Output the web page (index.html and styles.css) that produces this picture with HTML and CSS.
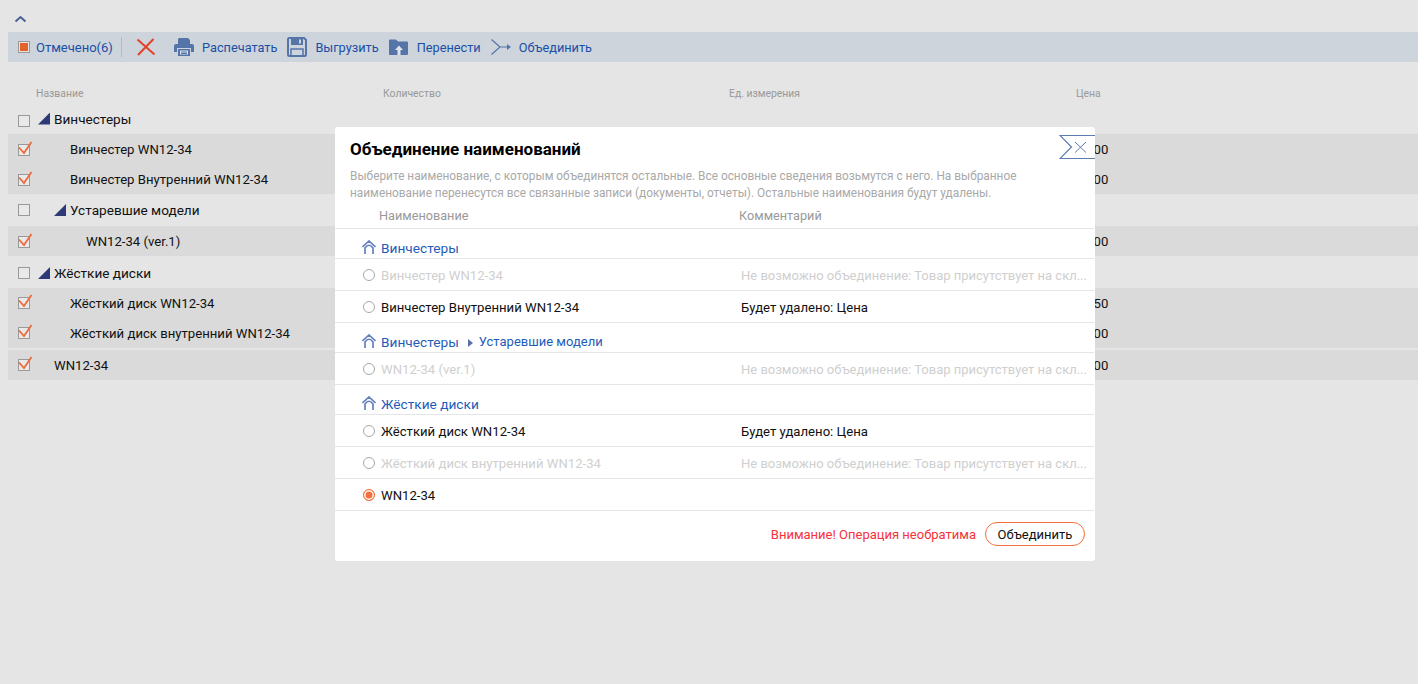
FILE: index.html
```html
<!DOCTYPE html>
<html lang="ru">
  <head>
    <meta charset="UTF-8" />
    <title>Объединение наименований</title>
    <link rel="stylesheet" href="styles.css">
  </head>
  <body>
    <div class="page">
      <div class="collapse">
        <svg width="13" height="8" viewBox="0 0 13 8"><path d="M1.500 6.500 6.500 2l5 4.500" fill="none" stroke="#4a5f92" stroke-width="2"/></svg>
      </div>

      <div class="toolbar">
        <span class="check check-part"></span>
        <a class="tool tool-first">Отмечено(6)</a>
        <span class="tool-sep"></span>
        <svg class="ico-del" width="20" height="18" viewBox="0 0 20 18"><path d="M1.500 1.500 18.500 16.500M17.500 1 2 17" fill="none" stroke="#e2432e" stroke-width="2"/></svg>
        <svg class="ico-print" width="20" height="20" viewBox="0 0 20 20">
          <path d="M5 1h9l2 2v4H4V2z" fill="#5574a8"/>
          <path d="M2 7h16a2 2 0 0 1 2 2v6h-3v-4H3v4H0V9a2 2 0 0 1 2-2z" fill="#5574a8"/>
          <path d="M4 12h12v7H4z" fill="#5574a8"/>
          <path d="M6 13.500h8v4H6z" fill="#dfe4ea"/>
          <path d="M7 15h6M7 16.500h6" stroke="#5574a8"/>
        </svg>
        <a class="tool">Распечатать</a>
        <svg class="ico-save" width="20" height="20" viewBox="0 0 20 20">
          <path d="M2.500 1h14.500l2 2v14.500a1.500 1.500 0 0 1-1.500 1.500h-15a1.500 1.500 0 0 1-1.500-1.500v-15a1.500 1.500 0 0 1 1.500-1.500z" fill="none" stroke="#5574a8" stroke-width="2"/>
          <path d="M4 1h12v7H4z" fill="#5574a8"/>
          <path d="M12 2.500h2v4h-2z" fill="#cdd4dc"/>
          <path d="M4 12h12v7H4z" fill="none" stroke="#5574a8" stroke-width="1.500"/>
        </svg>
        <a class="tool">Выгрузить</a>
        <svg class="ico-move" width="19" height="16" viewBox="0 0 19 16">
          <path d="M0 1.500a1 1 0 0 1 1-1h6l2 2h9a1 1 0 0 1 1 1V15a1 1 0 0 1-1 1H1a1 1 0 0 1-1-1z" fill="#5574a8"/>
          <path d="M10 6.500l4 4.500h-2.500v5h-3v-5H6z" fill="#dfe4ea"/>
        </svg>
        <a class="tool">Перенести</a>
        <svg class="ico-merge" width="20" height="16" viewBox="0 0 20 16">
          <path d="M0.500 0.500 9 8 0.500 15.500M9 8h8" fill="none" stroke="#5574a8" stroke-width="1.200"/>
          <path d="M16 5 20 8l-4 3z" fill="#5574a8"/>
        </svg>
        <a class="tool">Объединить</a>
      </div>

      <div class="cols">
        <span>Название</span>
        <span>Количество</span>
        <span>Ед. измерения</span>
        <span>Цена</span>
      </div>

      <div class="row row-group row-first row-low">
        <span class="check"></span>
        <span class="name lvl0"><i class="tri"></i>Винчестеры</span>
      </div>
      <div class="block row-low">
        <div class="row">
          <span class="check"><svg class="tick" viewBox="0 0 14 14"><path d="M1 5.500 6 11 13.500 0" /></svg></span>
          <span class="name lvl1">Винчестер WN12-34</span><span></span><span></span><span>1 200</span>
        </div>
        <div class="row">
          <span class="check"><svg class="tick" viewBox="0 0 14 14"><path d="M1 5.500 6 11 13.500 0" /></svg></span>
          <span class="name lvl1">Винчестер Внутренний WN12-34</span><span></span><span></span><span>1 300</span>
        </div>
      </div>
      <div class="row row-group row-tall">
        <span class="check"></span>
        <span class="name lvl1"><i class="tri"></i>Устаревшие модели</span>
      </div>
      <div class="block row-low">
        <div class="row">
          <span class="check"><svg class="tick" viewBox="0 0 14 14"><path d="M1 5.500 6 11 13.500 0" /></svg></span>
          <span class="name lvl2">WN12-34 (ver.1)</span><span></span><span></span><span>1 300</span>
        </div>
      </div>
      <div class="row row-group row-tall row-drop">
        <span class="check"></span>
        <span class="name lvl0"><i class="tri"></i>Жёсткие диски</span>
      </div>
      <div class="block">
        <div class="row">
          <span class="check"><svg class="tick" viewBox="0 0 14 14"><path d="M1 5.500 6 11 13.500 0" /></svg></span>
          <span class="name lvl1">Жёсткий диск WN12-34</span><span></span><span></span><span>1 150</span>
        </div>
        <div class="row">
          <span class="check"><svg class="tick" viewBox="0 0 14 14"><path d="M1 5.500 6 11 13.500 0" /></svg></span>
          <span class="name lvl1">Жёсткий диск внутренний WN12-34</span><span></span><span></span><span>1 100</span>
        </div>
      </div>
      <div class="block block-last">
        <div class="row">
          <span class="check"><svg class="tick" viewBox="0 0 14 14"><path d="M1 5.500 6 11 13.500 0" /></svg></span>
          <span class="name lvl0">WN12-34</span><span></span><span></span><span>1 100</span>
        </div>
      </div>

      <div class="modal">
        <svg class="modal-close" width="36" height="24" viewBox="0 0 36 24">
          <path d="M36 0.500H1L12.500 12 1 23.500H36" fill="#fff" stroke="#5b7db1" stroke-width="1.200"/>
          <path d="M16 7 27 17.500M27 7 16 17.500" fill="none" stroke="#5b7db1" stroke-width="1"/>
        </svg>
        <h3 class="modal-title">Объединение наименований</h3>
        <p class="modal-text">Выберите наименование, с которым объединятся остальные. Все основные сведения возьмутся с него. На выбранное наименование перенесутся все связанные записи (документы, отчеты). Остальные наименования будут удалены.</p>
        <div class="m-head">
          <span>Наименование</span>
          <span>Комментарий</span>
        </div>

        <div class="m-group">
          <svg class="ico-home" width="14" height="14" viewBox="0 0 14 14"><path d="M0.500 7 7 1l6.500 6M3 14V8Q7 2.500 11 8v6" fill="none" stroke="#6580bd" stroke-width="1.700"/></svg>
          <a>Винчестеры</a>
        </div>
        <div class="m-row off">
          <span class="radio"></span>
          <span class="m-name">Винчестер WN12-34</span>
          <span class="m-note">Не возможно объединение: Товар присутствует на скл...</span>
        </div>
        <div class="m-row">
          <span class="radio"></span>
          <span class="m-name">Винчестер Внутренний WN12-34</span>
          <span class="m-note">Будет удалено: Цена</span>
        </div>

        <div class="m-group">
          <svg class="ico-home" width="14" height="14" viewBox="0 0 14 14"><path d="M0.500 7 7 1l6.500 6M3 14V8Q7 2.500 11 8v6" fill="none" stroke="#6580bd" stroke-width="1.700"/></svg>
          <a>Винчестеры</a>
          <i class="crumb"></i>
          <a class="sub">Устаревшие модели</a>
        </div>
        <div class="m-row off">
          <span class="radio"></span>
          <span class="m-name">WN12-34 (ver.1)</span>
          <span class="m-note">Не возможно объединение: Товар присутствует на скл...</span>
        </div>

        <div class="m-group">
          <svg class="ico-home" width="14" height="14" viewBox="0 0 14 14"><path d="M0.500 7 7 1l6.500 6M3 14V8Q7 2.500 11 8v6" fill="none" stroke="#6580bd" stroke-width="1.700"/></svg>
          <a>Жёсткие диски</a>
        </div>
        <div class="m-row">
          <span class="radio"></span>
          <span class="m-name">Жёсткий диск WN12-34</span>
          <span class="m-note">Будет удалено: Цена</span>
        </div>
        <div class="m-row off">
          <span class="radio"></span>
          <span class="m-name">Жёсткий диск внутренний WN12-34</span>
          <span class="m-note">Не возможно объединение: Товар присутствует на скл...</span>
        </div>
        <div class="m-row">
          <span class="radio radio-on"></span>
          <span class="m-name">WN12-34</span>
        </div>

        <div class="m-foot">
          <span class="warn">Внимание! Операция необратима</span>
          <button class="btn" type="button">Объединить</button>
        </div>
      </div>
    </div>
  </body>
</html>
```

FILE: styles.css
```css
html,
body {
  margin: 0;
  height: 100%;
  background: #fff;
}
body {
  overflow: hidden;
  font-family: Roboto, "Liberation Sans", sans-serif;
  font-size: 13.150px;
  color: #111;
}
.page {
  position: relative;
  margin-right: 8px;
  padding-left: 8px;
  height: 684px;
  background: #e5e5e5;
}
.collapse {
  height: 32px;
  padding: 15px 0 0 6px;
  box-sizing: border-box;
  line-height: 0;
}

/* toolbar */
.toolbar {
  display: flex;
  align-items: center;
  height: 30px;
  padding-left: 10px;
  background: #cdd4dc;
}
.tool {
  color: #1a4fa5;
  font-size: 12.750px;
  white-space: nowrap;
}
.tool-first {
  margin-left: 6px;
  width: 77px;
  font-size: 13px;
}
.tool-sep {
  width: 1px;
  height: 20px;
  margin-left: 8px;
  background: #b4b9bf;
}
.ico-del {
  margin-left: 14px;
}
.ico-print {
  margin-left: 18px;
  margin-right: 8px;
}
.ico-save {
  margin-left: 10px;
  margin-right: 8px;
}
.ico-move {
  margin-left: 10px;
  margin-right: 9px;
}
.ico-merge {
  margin-left: 10px;
  margin-right: 8px;
}

/* table */
.cols {
  display: grid;
  grid-template-columns: 347px 346px 347px 1fr;
  height: 43px;
  padding: 25px 0 0 28px;
  box-sizing: border-box;
  font-size: 10.400px;
  line-height: 14px;
  color: #999;
}
.row {
  display: grid;
  grid-template-columns: 28px 346.500px 346.500px 346.500px 1fr;
  align-items: center;
  height: 30px;
}
.row .check {
  margin-left: 10px;
}
.row-low .check {
  margin-top: 2px;
}
.row-first {
  height: 29px;
}
.row-first .name {
  padding-bottom: 2px;
}
.row-tall {
  height: 32px;
}
.row-drop {
  padding-top: 2px;
  box-sizing: border-box;
}
.block {
  background: #dadada;
}
.block-last {
  margin-top: 2px;
}
.name {
  white-space: nowrap;
}
.row-group .name {
  font-size: 13.600px;
}
.lvl0 {
  padding-left: 18px;
}
.lvl1 {
  padding-left: 34px;
}
.lvl2 {
  padding-left: 50px;
}
.tri {
  display: inline-block;
  width: 12px;
  height: 12px;
  margin-left: -16px;
  margin-right: 4px;
  vertical-align: -1px;
  background: #2e3a78;
  clip-path: polygon(100% 0, 100% 100%, 0 100%);
}
.check {
  display: block;
  position: relative;
  width: 12px;
  height: 12px;
  box-sizing: border-box;
  border: 1px solid #999;
  background: #e9e9e9;
}
.check-part {
  background: #e2632b;
  box-shadow: inset 0 0 0 1px #e5e5e5;
}
.tick {
  position: absolute;
  left: -1px;
  top: -3px;
  width: 14px;
  height: 14px;
  overflow: visible;
  fill: none;
  stroke: #f0693a;
  stroke-width: 1.800;
}

/* modal */
.modal {
  position: absolute;
  left: 335px;
  top: 127px;
  width: 760px;
  height: 434px;
  background: #fff;
  border-radius: 3px;
  box-sizing: border-box;
}
.modal-close {
  position: absolute;
  right: 0;
  top: 8px;
}
.modal-title {
  margin: 0;
  padding: 12px 0 0 15px;
  font-size: 17px;
  line-height: 20px;
  font-weight: 700;
  color: #000;
}
.modal-text {
  margin: 0;
  padding: 9px 65px 0 15px;
  font-size: 11.850px;
  line-height: 17px;
  color: #a9a9a9;
}
.m-head {
  display: grid;
  grid-template-columns: 360px 1fr;
  height: 27px;
  padding: 5px 0 0 44px;
  box-sizing: border-box;
  border-bottom: 1px solid #e5e5e5;
  margin-right: 1px;
  font-size: 12.700px;
  line-height: 17px;
  color: #999;
}
.m-group {
  display: flex;
  align-items: flex-end;
  height: 30px;
  padding: 0 0 1px 27px;
  box-sizing: border-box;
  border-bottom: 1px solid #e5e5e5;
  margin-right: 1px;
  color: #1f5cb8;
  font-size: 13.700px;
  line-height: 18px;
}
.ico-home {
  margin-right: 5px;
  margin-bottom: 3px;
}
.crumb {
  width: 0;
  height: 0;
  margin: 0 6px 4px 9px;
  border-left: 5px solid #5b6fa8;
  border-top: 4.500px solid transparent;
  border-bottom: 4.500px solid transparent;
}
.sub {
  font-size: 13px;
}
.m-row {
  display: flex;
  align-items: center;
  height: 32px;
  padding: 1px 0 0 28px;
  box-sizing: border-box;
  border-bottom: 1px solid #e5e5e5;
  margin-right: 1px;
  color: #111;
}
.m-row.off {
  color: #cfcfcf;
}
.off .m-note {
  font-size: 13px;
}
.radio {
  width: 12px;
  height: 12px;
  margin-right: 6px;
  box-sizing: border-box;
  border: 1.500px solid #a8a8a8;
  border-radius: 50%;
  background: #fff;
}
.radio-on {
  border-color: #f5703c;
  background: #f5703c;
  box-shadow: inset 0 0 0 1.500px #fff;
}
.m-name {
  width: 360px;
  white-space: nowrap;
}
.m-foot {
  display: flex;
  align-items: center;
  justify-content: flex-end;
  height: 50px;
  padding: 0 10px 4px 0;
  box-sizing: border-box;
}
.warn {
  color: #f5323a;
  font-size: 13px;
  margin-right: 9px;
}
.btn {
  width: 100px;
  height: 24px;
  padding: 0;
  background: #fff;
  border: 1px solid #f5703c;
  border-radius: 12px;
  font-family: inherit;
  font-size: 13px;
  color: #111;
}
```
